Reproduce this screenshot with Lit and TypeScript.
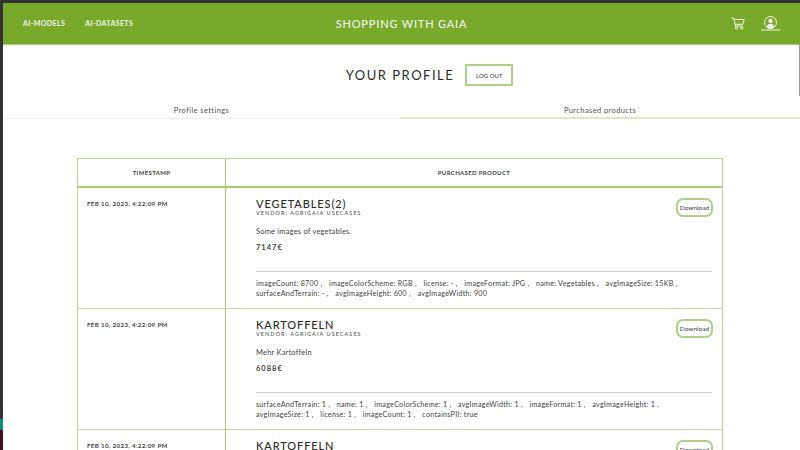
import { LitElement, html, css } from 'lit';
import { customElement } from 'lit/decorators.js';

type Purchase = {
  name: string
  description: string
  price: string
  attributes: string[]
}

const TIMESTAMP = 'Feb 10, 2023, 4:22:09 PM'

const purchases: Purchase[] = [
  {
    name: 'Vegetables(2)',
    description: 'Some images of vegetables.',
    price: '7147€',
    attributes: ['imageCount: 8700', 'imageColorScheme: RGB', 'license: -', 'imageFormat: JPG', 'name: Vegetables', 'avgImageSize: 15KB', 'surfaceAndTerrain: -', 'avgImageHeight: 600', 'avgImageWidth: 900'],
  },
  {
    name: 'Kartoffeln',
    description: 'Mehr Kartoffeln',
    price: '6088€',
    attributes: ['surfaceAndTerrain: 1', 'name: 1', 'imageColorScheme: 1', 'avgImageWidth: 1', 'imageFormat: 1', 'avgImageHeight: 1', 'avgImageSize: 1', 'license: 1', 'imageCount: 1', 'containsPII: true'],
  },
  {
    name: 'Kartoffeln',
    description: 'Mehr Kartoffeln',
    price: '6088€',
    attributes: ['surfaceAndTerrain: 1', 'name: 1', 'imageColorScheme: 1'],
  },
]

@customElement('app-root')
export class AppRoot extends LitElement {

  static styles = css`
    :host {
      display: block;
      width: 800px;
      height: 450px;
      overflow: hidden;
      position: relative;
      background: #fff;
      color: #333;
      font-family: Lato, "Noto Sans", sans-serif;
    }

    * { box-sizing: border-box; }

    .window { display: flex; height: 450px; }

    .edge {
      flex: 0 0 3px;
      display: flex;
      flex-direction: column;
      background: #333;
    }
    .edge .fill { flex: 1; }
    .edge .teal { height: 11px; background: #0f8f6e; }
    .edge .wine { height: 20px; background: #4a0f24; }

    .main { flex: 1; min-width: 0; display: flex; flex-direction: column; }
    .top-edge { flex: 0 0 3px; background: #333; }

    header {
      flex: 0 0 42px;
      display: grid;
      grid-template-columns: 1fr auto 1fr;
      align-items: center;
      padding: 0 20px 1px 20px;
      background: #79a92b;
      border-bottom: 1px solid #a9cb70;
      color: #f2f6e8;
    }
    nav { display: flex; gap: 20px; font-size: 7px; font-weight: 700; letter-spacing: 0.4px; }
    .brand { font-size: 11px; font-weight: 500; letter-spacing: 0.8px; }
    .icons { display: flex; justify-content: flex-end; align-items: center; gap: 16px; }
    .icons svg { display: block; fill: none; stroke: #f2f6e8; }

    .heading {
      display: grid;
      grid-template-columns: 1fr auto 1fr;
      align-items: center;
      column-gap: 11px;
      padding-top: 19px;
      padding-right: 3px;
    }
    h1 { grid-column: 2; margin: 0; font-size: 13px; font-weight: 400; letter-spacing: 1.5px; color: #2b2b2b; }
    .logout {
      width: 48px;
      height: 22px;
      padding: 0;
      background: #fff;
      border: 2px solid #afd08a;
      color: #444;
      font: 500 6px Lato, sans-serif;
    }

    .tabs { display: grid; grid-template-columns: 397px 400px; margin-top: 17px; }
    .tab {
      height: 16px;
      text-align: center;
      font-size: 7.5px;
      letter-spacing: 0.4px;
      line-height: 15px;
      color: #555;
      border-bottom: 1px solid #eee;
    }
    .tab.active { border-bottom: 2px solid #dfe9c8; }

    .table {
      width: 646px;
      margin: 39px 0 0 74px;
      border: 1px solid #b9d68e;
      border-bottom: 0;
      display: grid;
      grid-template-columns: 148px 1fr;
    }
    .th {
      height: 29px;
      display: flex;
      align-items: center;
      justify-content: center;
      font-size: 6px;
      font-weight: 700;
      letter-spacing: 0.35px;
      color: #444;
      text-transform: uppercase;
      border-bottom: 2px solid #a9cb70;
    }
    .th.first, .time { border-right: 1px solid #a9cb70; }

    .time {
      padding: 12px 0 0 9px;
      height: 121px;
      font-size: 6.2px;
      font-weight: 700;
      letter-spacing: 0.35px;
      color: #444;
      text-transform: uppercase;
      border-bottom: 1px solid #c5dc9f;
    }
    .product {
      position: relative;
      height: 121px;
      padding: 9px 10px 0 30px;
      border-bottom: 1px solid #c5dc9f;
    }
    h2 {
      margin: 0;
      font-size: 11px;
      line-height: 13px;
      font-weight: 500;
      letter-spacing: 0.9px;
      color: #2b2b2b;
      text-transform: uppercase;
    }
    .vendor {
      font-size: 5.5px;
      line-height: 6px;
      font-weight: 500;
      letter-spacing: 1.05px;
      color: #555;
      text-transform: uppercase;
    }
    .description { margin: 11px 0 0; font-size: 7.5px; line-height: 10px; letter-spacing: 0.2px; color: #444; }
    .price { margin: 6px 0 0; font-size: 7.5px; line-height: 10px; font-weight: 700; letter-spacing: 1px; color: #444; }
    hr { margin: 18px 0 0; border: 0; border-top: 1px solid #ccc; }
    .attributes {
      margin-top: 7px;
      font-size: 7.2px;
      line-height: 10px;
      letter-spacing: 0.25px;
      color: #444;
    }
    .attributes span { margin-right: 4.5px; }

    .download {
      position: absolute;
      top: 10px;
      right: 9px;
      width: 37px;
      height: 19px;
      padding: 0;
      background: #fff;
      border: 2px solid #afd08a;
      border-radius: 7px;
      color: #444;
      font: 400 6.5px Lato, sans-serif;
    }

    .scrollbar {
      position: absolute;
      top: 44px;
      right: 0;
      width: 1px;
      height: 52px;
      background: #999;
    }
  `

  render() {
    return html`
      <div class="window">
        <div class="edge">
          <div class="fill"></div>
          <div class="teal"></div>
          <div class="wine"></div>
        </div>
        <div class="main">
          <div class="top-edge"></div>
          <header>
            <nav><span>AI-MODELS</span><span>AI-DATASETS</span></nav>
            <div class="brand">SHOPPING WITH GAIA</div>
            <div class="icons">
              <svg width="14" height="13" viewBox="0 0 14 13" stroke-width="1">
                <path d="M.5 1h2.2l1.8 8h7"/>
                <path d="M3.2 2.5h10l-1.3 4.8H4.3"/>
                <circle cx="5.6" cy="11" r="1.2"/>
                <circle cx="10.8" cy="11" r="1.2"/>
              </svg>
              <svg width="19" height="15" viewBox="0 0 19 15">
                <circle cx="9.5" cy="6.5" r="6" stroke-width="1"/>
                <circle cx="9.5" cy="5" r="2.2" fill="#f2f6e8" stroke="none"/>
                <path d="M5.6 11.2c.5-2.4 2-3.4 3.9-3.4s3.4 1 3.9 3.4a6 6 0 0 1-7.8 0z" fill="#f2f6e8" stroke="none"/>
                <path d="M0 14h19" stroke-width="1"/>
              </svg>
            </div>
          </header>

          <div class="heading">
            <h1>YOUR PROFILE</h1>
            <button class="logout">LOG OUT</button>
          </div>

          <div class="tabs">
            <div class="tab">Profile settings</div>
            <div class="tab active">Purchased products</div>
          </div>

          <div class="table">
            <div class="th first">Timestamp</div>
            <div class="th">Purchased product</div>
            ${purchases.map((p) => html`
              <div class="time">${TIMESTAMP}</div>
              <div class="product">
                <h2>${p.name}</h2>
                <div class="vendor">Vendor: AgriGaia UseCases</div>
                <p class="description">${p.description}</p>
                <p class="price">${p.price}</p>
                <hr />
                <div class="attributes">
                  ${p.attributes.map((a, i) => html`<span>${a}${i < p.attributes.length - 1 ? ' ,' : ''}</span> `)}
                </div>
                <button class="download">Download</button>
              </div>
            `)}
          </div>
        </div>
      </div>
      <div class="scrollbar"></div>
    `
  }
}
